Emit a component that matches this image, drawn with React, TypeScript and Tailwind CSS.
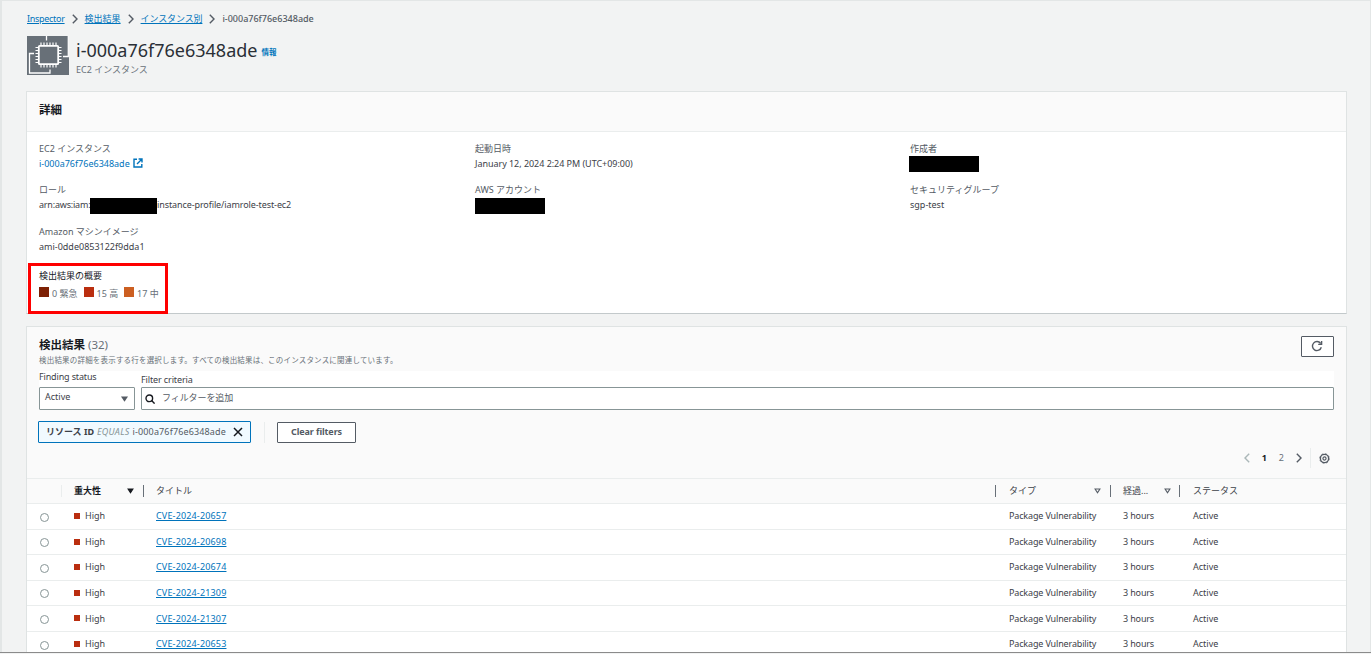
import type { ReactNode } from "react";
import clsx from "clsx";

const findings = [
  "CVE-2024-20657",
  "CVE-2024-20698",
  "CVE-2024-20674",
  "CVE-2024-21309",
  "CVE-2024-21307",
  "CVE-2024-20653",
];

const columns = "grid grid-cols-[116px_853px_114px_70px_1fr] pl-[13px]";

function Crumb({ children }: { children: ReactNode }) {
  return (
    <a href="#" className="text-[#0073bb] underline underline-offset-1">
      {children}
    </a>
  );
}

function Chevron({ className }: { className?: string }) {
  return (
    <svg viewBox="0 0 6 10" className={clsx("h-[10px] w-[6px] shrink-0", className)} fill="none" stroke="currentColor" strokeWidth="1.4">
      <path d="M0.8 0.8 5 5 0.8 9.2" />
    </svg>
  );
}

function InstanceIcon() {
  const pins = [-7.5, -4.5, -1.5, 1.5, 4.5, 7.5];
  return (
    <svg viewBox="0 0 42 39" className="h-[39px] w-[42px] shrink-0" fill="none" stroke="#fff">
      <rect width="42" height="39" fill="#687078" stroke="none" />
      <rect x="11.8" y="9.8" width="19.4" height="18.4" rx="1" strokeWidth="1.8" />
      {pins.map((p) => (
        <g key={p} strokeWidth="1.2">
          <path d={`M${21.5 + p} 9V6.5M${21.5 + p} 29v2.5`} />
          <path d={`M11 ${19 + p}H8.500M32 ${19 + p}h2.500`} />
        </g>
      ))}
      <path d="M19.500 0v4.500M19.500 4.500M41.300 0V20.500H36M7 17.500H2.500v19.500h20.500v-3.500" strokeWidth="1.300" />
    </svg>
  );
}

function Field({ label, children }: { label: string; children: ReactNode }) {
  return (
    <div className="h-[41.6px]">
      <div className="h-[15px] text-[9px] leading-[15px] text-[#545b64]">{label}</div>
      <div className="flex h-[15px] items-center whitespace-nowrap leading-[15px]">{children}</div>
    </div>
  );
}

function Redacted({ className }: { className?: string }) {
  return <span className={clsx("h-4 shrink-0 bg-black", className)} />;
}

function SortArrow({ filled }: { filled?: boolean }) {
  return (
    <svg viewBox="0 0 8 7" className="mr-px h-[6px] w-[7px] shrink-0" fill={filled ? "#16191f" : "none"} stroke={filled ? "#16191f" : "#545b64"} strokeWidth="1.3">
      <path d="M1.200 1.200h5.600L4 5.600z" />
    </svg>
  );
}

export default function App() {
  return (
    <div className="flex h-[654px] w-[1371px] flex-col overflow-hidden bg-[#f2f3f3] font-['Noto_Sans','Noto_Sans_CJK_JP',sans-serif] text-[9px] text-[#3c4148]">
      <div className="min-h-0 flex-1 overflow-hidden border-t border-r border-l-2 border-[#e3e6e6] pr-[23px] pl-6">
        <nav className="mt-[10px] flex h-4 items-center pl-px text-[9px] text-[#545b64]">
          <span className="tracking-[-0.3px]">
            <Crumb>Inspector</Crumb>
          </span>
          <Chevron className="mr-[7px] ml-[7px]" />
          <Crumb>検出結果</Crumb>
          <Chevron className="mr-[7px] ml-[7px]" />
          <span className="tracking-[-0.12px]">
            <Crumb>インスタンス別</Crumb>
          </span>
          <Chevron className="mr-[7px] ml-[7px]" />
          <span className="font-medium">i-000a76f76e6348ade</span>
        </nav>

        <header className="mt-[9px] flex h-[39px]">
          <div className="-mr-px pl-px">
            <InstanceIcon />
          </div>
          <div className="ml-[8px]">
            <div className="flex h-[28px] items-center">
              <h1 className="text-[18px] leading-7 text-[#2a2f36]">i-000a76f76e6348ade</h1>
              <a href="#" className="mt-[5px] ml-1 text-[7.5px] font-bold text-[#0073bb]">情報</a>
            </div>
            <div className="h-3 leading-3 text-[#687078]">EC2 インスタンス</div>
          </div>
        </header>

        <section className="relative mt-4 h-[223px] border border-[#dfe3e3] border-b-[#c3c9cb] bg-white">
          <h2 className="flex h-[40px] items-center border-b border-[#eaeded] bg-[#fafafa] pl-3 text-[11.5px] font-bold text-[#16191f]">
            <span className="-mt-1">詳細</span>
          </h2>
          <div className="grid grid-cols-[436px_435px_1fr] pt-[8.500px] pl-3">
            <div>
              <Field label="EC2 インスタンス">
                <a href="#" className="text-[#0073bb]">i-000a76f76e6348ade</a>
                <svg viewBox="0 0 10 10" className="ml-[3px] h-[10px] w-[10px]" fill="none" stroke="#0073bb" strokeWidth="1.400">
                  <path d="M4 1.200H1v7.800h7.800V6M5.600 1H9v3.400M9 1 4 6" />
                </svg>
              </Field>
              <Field label="ロール">
                <span className="w-[51px] tracking-[-0.2px]">arn:aws:iam:</span>
                <Redacted className="mt-[2px] w-[67px]" />
                <span className="tracking-[-0.1px]">instance-profile/iamrole-test-ec2</span>
              </Field>
              <Field label="Amazon マシンイメージ">ami-0dde0853122f9dda1</Field>
            </div>
            <div>
              <Field label="起動日時">
                <span className="tracking-[-0.04px]">January 12, 2024 2:24 PM (UTC+09:00)</span>
              </Field>
              <Field label="AWS アカウント">
                <Redacted className="mt-[2px] w-[70px]" />
              </Field>
            </div>
            <div>
              <Field label="作成者">
                <Redacted className="mt-px -ml-px w-[70px]" />
              </Field>
              <Field label="セキュリティグループ">sgp-test</Field>
            </div>
          </div>
          <div className="absolute top-[171px] left-[1px] h-[51px] w-[140px] border-3 border-[#fe0000] pl-2">
            <div className="mt-[2px] h-4 text-[9px] leading-4 text-[#16191f]">検出結果の概要</div>
            <div className="mt-[2px] flex h-4 items-center whitespace-nowrap text-[#687078]">
              <span className="mr-[3px] -mt-[4px] size-[10px] bg-[#7d2105]" />
              <span className="w-[31.5px]">0 緊急</span>
              <span className="mr-[3px] -mt-[4px] size-[10px] bg-[#ba2e0f]" />
              <span className="w-[27.5px]">15 高</span>
              <span className="mr-[3px] -mt-[4px] size-[10px] bg-[#cc5f21]" />
              <span>17 中</span>
            </div>
          </div>
        </section>

        <section className="mt-3 h-[340px] border border-[#dfe3e3] bg-[#fafafa]">
          <div className="flex h-[44px] justify-between pr-3 pl-3">
            <div>
              <h2 className="mt-[9px] flex h-[18px] items-center text-[11.500px] leading-[18px] text-[#16191f]">
                <b>検出結果</b>
                <span className="ml-[3px] text-[#687078]">(32)</span>
              </h2>
              <p className="h-[13px] text-[7.500px] leading-[13px] tracking-[0.19px] text-[#687078]">
                検出結果の詳細を表示する行を選択します。すべての検出結果は、このインスタンスに関連しています。
              </p>
            </div>
            <button className="mt-[9px] flex h-[21px] w-[33px] items-center justify-center rounded-[1px] border border-[#545b64] bg-white pr-px pb-px">
              <svg viewBox="0 0 12 12" className="size-3" fill="none" stroke="#545b64" strokeWidth="1.400">
                <path d="M10.300 7.300A4.500 4.500 0 1 1 9.600 3.400M10.600 1v3.400H7.200" />
              </svg>
            </button>
          </div>

          <div className="mx-3 flex bg-white">
            <div className="mr-[6px] w-[96px]">
              <div className="h-4 leading-[11px] tracking-[-0.15px]">Finding status</div>
              <div className="flex h-[23px] items-center justify-between rounded-[1px] border border-[#879596] bg-white pr-[6px] pl-[5px]">
                <span className="-mt-[3px]">Active</span>
                <svg viewBox="0 0 8 6" className="h-[6px] w-[7px]" fill="#545b64"><path d="M0 0h8L4 6z" /></svg>
              </div>
            </div>
            <div className="flex-1">
              <div className="h-4 pt-[3px] leading-[12px] tracking-[-0.12px]">Filter criteria</div>
              <div className="flex h-[23px] items-center rounded-[1px] border border-[#879596] bg-white pl-[3px] text-[#545b64]">
                <svg viewBox="0 0 10 10" className="mr-[7px] size-[10px]" fill="none" stroke="#16191f" strokeWidth="1.400">
                  <circle cx="4.300" cy="4.300" r="3.300" />
                  <path d="m6.600 6.600 3 3" />
                </svg>
                <span className="-mt-[2px] tracking-[-0.08px]">フィルターを追加</span>
              </div>
            </div>
          </div>

          <div className="mt-[11px] flex h-[22px] items-center pl-[11px]">
            <div className="flex h-[22px] w-[213px] items-center rounded-[1px] border border-[#0073bb] bg-[#f1faff] pl-[7px] whitespace-nowrap text-[#545b64]">
              <b className="text-[#3c4148]">リソース ID</b>
              <i className="mx-[3px] tracking-[0.25px] text-[#879596]">EQUALS</i>
              <span className="tracking-[0.14px]">i-000a76f76e6348ade</span>
              <svg viewBox="0 0 10 10" className="ml-[7px] size-[10px]" stroke="#16191f" strokeWidth="1.500">
                <path d="m1 1 8 8M9 1 1 9" />
              </svg>
            </div>
            <span className="mr-3 ml-[13px] h-[21px] w-px bg-[#eaeded]" />
            <button className="h-[21px] w-[79px] rounded-[1px] border border-[#545b64] bg-white pb-px font-bold tracking-[-0.1px] text-[#545b64]">
              Clear filters
            </button>
          </div>

          <div className="mt-[5px] flex h-[20px] items-center justify-end pr-[16px] text-[#687078]">
            <Chevron className="rotate-180 text-[#aab7b8]" />
            <b className="ml-3 text-[#16191f]">1</b>
            <span className="ml-3">2</span>
            <Chevron className="ml-3 text-[#545b64]" />
            <span className="mr-[8px] ml-2 h-5 w-px bg-[#eaeded]" />
            <svg viewBox="0 0 12 12" className="size-[11px]" fill="none" stroke="#545b64">
              <circle cx="6" cy="6" r="4.500" strokeWidth="1.500" />
              <circle cx="6" cy="6" r="5.300" strokeWidth="0.700" strokeDasharray="2.080" />
              <circle cx="6" cy="6" r="1.700" strokeWidth="1.300" />
            </svg>
          </div>

          <div className={clsx(columns, "mt-[10px] h-[26px] items-center border-y border-[#eaeded] text-[#3c4148]")}>
            <div className="flex items-center">
              <span className="mr-3 ml-[21px] h-3 w-px bg-[#eaeded]" />
              <b className="w-[53px] text-[#16191f]">重大性</b>
              <SortArrow filled />
              <span className="ml-2 h-3 w-px bg-[#687078]" />
            </div>
            <div className="flex items-center justify-between">
              <span>タイトル</span>
              <span className="mr-[13px] h-3 w-px bg-[#687078]" />
            </div>
            <div className="flex items-center">
              <span className="w-[85px]">タイプ</span>
              <SortArrow />
              <span className="ml-2 h-3 w-px bg-[#687078]" />
            </div>
            <div className="flex items-center">
              <span className="w-[41px]">経過...</span>
              <SortArrow />
              <span className="ml-[7px] h-3 w-px bg-[#687078]" />
            </div>
            <span>ステータス</span>
          </div>

          {findings.map((cve) => (
            <div key={cve} className={clsx(columns, "h-[25.6px] items-center border-b border-[#eaeded] bg-white")}>
              <div className="-mt-[0.5px] flex items-center">
                <span className="mt-[2px] size-[9px] rounded-full border border-[#879596]" />
                <span className="mr-[5px] ml-[25px] size-[6px] bg-[#ba2e0f]" />
                <span>High</span>
              </div>
              <a href="#" className="-mt-[0.5px] tracking-[0.16px] text-[#0073bb] underline underline-offset-1">{cve}</a>
              <span className="-mt-[0.5px] tracking-[-0.15px]">Package Vulnerability</span>
              <span className="-mt-[0.5px] tracking-[-0.15px]">3 hours</span>
              <span className="-mt-[0.5px]">Active</span>
            </div>
          ))}
        </section>
      </div>
      <div className="h-[2px] shrink-0 border-t border-[#8b8b8b] bg-[#f2f3f3]" />
    </div>
  );
}
